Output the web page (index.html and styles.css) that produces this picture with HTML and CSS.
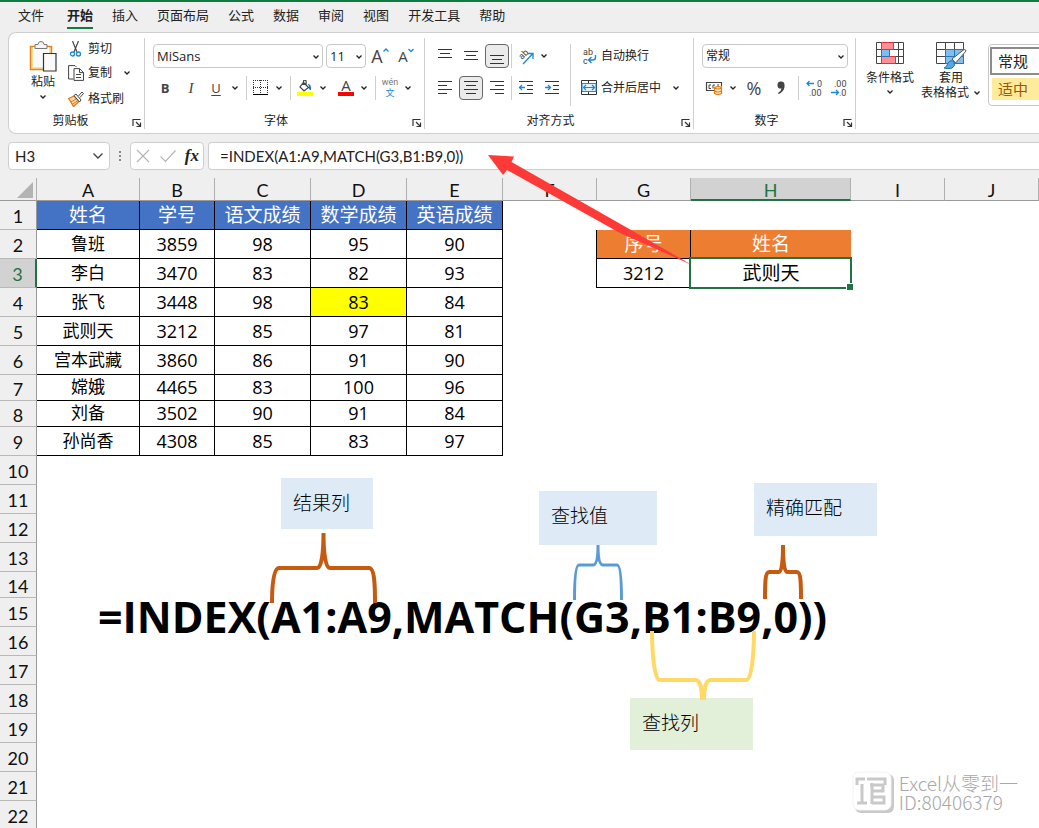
FILE: index.html
```html
<!DOCTYPE html>
<html lang="zh-CN">
<head>
<meta charset="utf-8">
<title>INDEX + MATCH</title>
<link rel="stylesheet" href="styles.css">
</head>
<body>
<svg class="defs" aria-hidden="true">
  <symbol id="chev" viewBox="0 0 8 8"><path d="M1.500 2.500 4 5l2.500-2.500" fill="none" stroke="#222" stroke-width="1.300"/></symbol>
  <symbol id="launch" viewBox="0 0 10 10"><path d="M1 8V1.500H8.500M4 4l4 4M8.500 4.500V8.500H4.500" fill="none" stroke="#333" stroke-width="1.200"/></symbol>
</svg>

<nav class="tabs">
  <a href="#file" class="tab tab-file">文件</a>
  <a href="#home" class="tab active">开始</a>
  <a href="#insert" class="tab">插入</a>
  <a href="#layout" class="tab">页面布局</a>
  <a href="#formula" class="tab">公式</a>
  <a href="#data" class="tab">数据</a>
  <a href="#review" class="tab">审阅</a>
  <a href="#view" class="tab">视图</a>
  <a href="#dev" class="tab">开发工具</a>
  <a href="#help" class="tab">帮助</a>
</nav>

<section class="ribbon">
  <div class="group clipboard">
    <div class="body">
      <button class="big">
        <svg width="28" height="32" viewBox="0 0 28 32"><path d="M1.500 5.500h21v23h-21z" fill="#ffdf94" stroke="#e3821f" stroke-width="1.500"/><path d="M4 6h16v20H4z" fill="#fafafa"/><path d="M6 3.500h3a3 3 0 0 1 6 0h3v4H6z" fill="#f4f4f4" stroke="#777"/><path d="M14.500 12.500h12.500v17.500H14.500z" fill="#fafafa" stroke="#333" stroke-width="1.200"/></svg>
        <span>粘贴</span>
        <svg class="chev" width="8" height="8"><use href="#chev"/></svg>
      </button>
      <div class="stack">
        <button class="cmd"><svg width="16" height="16" viewBox="0 0 16 16"><path d="M4.500 0l4.500 11M10.500 0L6 11" stroke="#444" stroke-width="1.200"/><circle cx="4.500" cy="13" r="2" fill="none" stroke="#1e88d0" stroke-width="1.300"/><circle cx="10.500" cy="13" r="2" fill="none" stroke="#1e88d0" stroke-width="1.300"/></svg>剪切</button>
        <button class="cmd"><svg width="16" height="16" viewBox="0 0 16 16"><path d="M5.500 14H.600V.600h6.400l1.500 1.500M6 3.600h5.500l4 4V15.400H6zM11.500 3.600v4h4M8 9.500h5M8 12.500h5" fill="none" stroke="#444"/></svg>复制<svg class="chev" width="8" height="8"><use href="#chev"/></svg></button>
        <button class="cmd"><svg width="16" height="16" viewBox="0 0 16 16"><path d="M.700 7.500L6 5l5 5.500-5.500 5z" fill="#ffd9a8" stroke="#e07a10" stroke-width="1.300"/><path d="M3 11l5-3M4.500 13l5-3" stroke="#e07a10"/><path d="M6 4.500l2-1.500 5 6-1.500 2zM10.500 5L14 1l1.500 1.500L12 6.500" fill="#fff" stroke="#444"/></svg>格式刷</button>
      </div>
    </div>
    <footer class="label"><span>剪贴板</span><button class="launch" aria-label="剪贴板设置"><svg width="10" height="10"><use href="#launch"/></svg></button></footer>
  </div>

  <div class="group font">
    <div class="body rows">
      <div class="row">
        <label class="pick pick-font"><select aria-label="字体"><option>MiSans</option></select><svg class="chev" width="8" height="8"><use href="#chev"/></svg></label>
        <label class="pick pick-size"><select aria-label="字号"><option>11</option></select><svg class="chev" width="8" height="8"><use href="#chev"/></svg></label>
        <button class="tool w26" aria-label="增大字号"><span class="grow">A</span><svg class="caret" width="6" height="16" viewBox="0 0 6 16"><path d="M.500 3.500L3 1l2.500 2.500" fill="none" stroke="#1e88d0" stroke-width="1.300"/></svg></button>
        <button class="tool w26" aria-label="减小字号"><span class="shrink">A</span><svg class="caret" width="6" height="16" viewBox="0 0 6 16"><path d="M.500 1L3 3.500 5.500 1" fill="none" stroke="#1e88d0" stroke-width="1.300"/></svg></button>
      </div>
      <div class="row">
        <button class="tool w26"><b>B</b></button>
        <button class="tool w26"><i>I</i></button>
        <button class="tool w24"><u>U</u></button>
        <button class="drop" aria-label="下划线选项"><svg width="8" height="8"><use href="#chev"/></svg></button>
        <span class="sep"></span>
        <button class="tool w22" aria-label="边框"><svg width="16" height="16" viewBox="0 0 16 16" shape-rendering="crispEdges"><path d="M0 .500h15M0 7.500h15M.500 0v13M7.500 0v13M14.500 0v13" stroke="#333" stroke-dasharray="1 1"/><path d="M0 14.500h15" stroke="#000"/></svg></button>
        <button class="drop" aria-label="边框选项"><svg width="8" height="8"><use href="#chev"/></svg></button>
        <span class="sep"></span>
        <button class="tool w22" aria-label="填充颜色"><svg width="16" height="16" viewBox="0 0 16 16"><path d="M6.500 2.500l5 5-4.500 3.500-4-4zM6.500 5V1.500a1.300 1.300 0 0 1 2.600 0V5" fill="none" stroke="#444" stroke-width="1.200"/><path d="M10.500 4q4-.500 3.500 6-3 0-2-4z" fill="#1e6fb8"/><path d="M0 12h16v4H0z" fill="#ff0"/></svg></button>
        <button class="drop" aria-label="填充颜色选项"><svg width="8" height="8"><use href="#chev"/></svg></button>
        <button class="tool w22 gap-left" aria-label="字体颜色"><span class="color-a">A</span></button>
        <button class="drop" aria-label="字体颜色选项"><svg width="8" height="8"><use href="#chev"/></svg></button>
        <span class="sep"></span>
        <button class="tool w22 pinyin"><span>wén</span><span class="wen">文</span></button>
        <button class="drop" aria-label="拼音选项"><svg width="8" height="8"><use href="#chev"/></svg></button>
      </div>
    </div>
    <footer class="label"><span>字体</span><button class="launch" aria-label="字体设置"><svg width="10" height="10"><use href="#launch"/></svg></button></footer>
  </div>

  <div class="group align">
    <div class="body">
      <div class="rows">
        <div class="row">
          <button class="tool w26" aria-label="顶端对齐"><svg width="16" height="16" viewBox="0 0 16 16"><path d="M1 1.500h14M3 5.500h10M1 9.500h14" stroke="#333"/></svg></button>
          <button class="tool w26" aria-label="垂直居中"><svg width="16" height="16" viewBox="0 0 16 16"><path d="M1 3.500h14M3 7.500h10M1 11.500h14" stroke="#333"/></svg></button>
          <button class="tool w26 on" aria-label="底端对齐"><svg width="16" height="16" viewBox="0 0 16 16"><path d="M1 7.500h14M3 11.500h10M1 15.500h14" stroke="#333"/></svg></button>
          <span class="sep"></span>
          <button class="tool w24" aria-label="方向"><svg width="20" height="20" viewBox="0 0 20 20"><text class="ab" transform="translate(7 14) rotate(-45)">ab</text><path d="M8 18L17.500 8M12.500 7.500H18V13" fill="none" stroke="#1e88d0" stroke-width="1.300"/></svg></button>
          <button class="drop" aria-label="方向选项"><svg width="8" height="8"><use href="#chev"/></svg></button>
        </div>
        <div class="row">
          <button class="tool w26" aria-label="左对齐"><svg width="16" height="16" viewBox="0 0 16 16"><path d="M1 1.500h14M1 5.500h9M1 9.500h14M1 13.500h9" stroke="#333"/></svg></button>
          <button class="tool w26 on" aria-label="居中"><svg width="16" height="16" viewBox="0 0 16 16"><path d="M1 1.500h14M3 5.500h10M1 9.500h14M3 13.500h10" stroke="#333"/></svg></button>
          <button class="tool w26" aria-label="右对齐"><svg width="16" height="16" viewBox="0 0 16 16"><path d="M1 1.500h14M6 5.500h9M1 9.500h14M6 13.500h9" stroke="#333"/></svg></button>
          <span class="sep"></span>
          <button class="tool w26" aria-label="减少缩进"><svg width="16" height="16" viewBox="0 0 16 16"><path d="M1 1.500h14M9 5.500h6M9 9.500h6M1 13.500h14" stroke="#333"/><path d="M7 7.500H1.500M4 5L1.500 7.500 4 10" fill="none" stroke="#1e88d0" stroke-width="1.300"/></svg></button>
          <button class="tool w26" aria-label="增加缩进"><svg width="16" height="16" viewBox="0 0 16 16"><path d="M1 1.500h14M9 5.500h6M9 9.500h6M1 13.500h14" stroke="#333"/><path d="M1 7.500h5.500M4 5l2.500 2.500L4 10" fill="none" stroke="#1e88d0" stroke-width="1.300"/></svg></button>
        </div>
      </div>
      <span class="divider"></span>
      <div class="rows">
        <div class="row"><button class="cmd"><svg width="16" height="20" viewBox="0 0 16 20"><text x="2" y="9" class="ab">ab</text><text x="2" y="18" class="ab">c</text><path d="M14.500 9v2.500q0 2.500-3 2.500H8M10.500 11L7.500 14l3 3" fill="none" stroke="#1e88d0" stroke-width="1.400"/></svg>自动换行</button></div>
        <div class="row"><button class="cmd"><svg width="16" height="16" viewBox="0 0 16 16"><path d="M.500 .500h15v14H.500zM7.500 1v3M7.500 11v3" fill="none" stroke="#333"/><path d="M1 3.500h14v8H1z" fill="#e3f1fb" stroke="#1e88d0"/><path d="M2.500 7.500h11M5 5L2.500 7.500 5 10M11 5l2.500 2.500L11 10" fill="none" stroke="#1e88d0" stroke-width="1.200"/></svg>合并后居中<svg class="chev" width="8" height="8"><use href="#chev"/></svg></button></div>
      </div>
    </div>
    <footer class="label"><span>对齐方式</span><button class="launch" aria-label="对齐设置"><svg width="10" height="10"><use href="#launch"/></svg></button></footer>
  </div>

  <div class="group number">
    <div class="body rows">
      <div class="row"><label class="pick pick-number"><select aria-label="数字格式"><option>常规</option></select><svg class="chev" width="8" height="8"><use href="#chev"/></svg></label></div>
      <div class="row">
        <button class="tool w24" aria-label="会计格式"><svg width="18" height="16" viewBox="0 0 18 16"><path d="M9 10.500H1.500v-8h15v4" fill="none" stroke="#444" stroke-width="1.200"/><path d="M6 5H4v3.500h2M8 8.500V5h2M12 5h2" fill="none" stroke="#444"/><path d="M9.500 7.500q3.500-2 7 0v6q-3.500 2-7 0z" fill="#ffe3c2" stroke="#e07a10" stroke-width="1.200"/><path d="M9.500 8q3.500 2 7 0M9.500 11q3.500 2 7 0" fill="none" stroke="#e07a10" stroke-width="1.200"/></svg></button>
        <button class="drop" aria-label="会计格式选项"><svg width="8" height="8"><use href="#chev"/></svg></button>
        <button class="tool w28 percent">%</button>
        <button class="tool w26" aria-label="千位分隔"><svg width="10" height="14" viewBox="0 0 10 14"><path d="M1.500 4.200a3.300 3.300 0 0 1 7-.500C9 8 6.500 11.500 2.500 13L2 12q3-1.500 3.500-4.500-4 .500-4-3.300z" fill="#444"/></svg></button>
        <span class="sep"></span>
        <button class="tool w24" aria-label="增加小数位"><svg width="16" height="20" viewBox="0 0 16 20"><text x="11" y="9" class="dec">0</text><text x="3" y="18" class="dec">.00</text><path d="M8 5.500H1M3.500 3L1 5.500 3.500 8" fill="none" stroke="#1e88d0" stroke-width="1.300"/></svg></button>
        <button class="tool w26" aria-label="减少小数位"><svg width="16" height="20" viewBox="0 0 16 20"><text x="3" y="9" class="dec">.00</text><text x="8" y="18" class="dec">.0</text><path d="M0 14.500h7.500M5 12l2.500 2.500L5 17" fill="none" stroke="#1e88d0" stroke-width="1.300"/></svg></button>
      </div>
    </div>
    <footer class="label"><span>数字</span><button class="launch" aria-label="数字设置"><svg width="10" height="10"><use href="#launch"/></svg></button></footer>
  </div>

  <div class="group styles">
    <button class="big"><svg width="28" height="28" viewBox="0 0 28 28"><path d="M.500 1.500h27v21H.500zM.500 8.500h27M.500 15.500h27M5.500 1.500v21M22.500 1.500v21" fill="#fff" stroke="#444"/><path d="M5.500 1.500h12v7h-12zM5.500 15.500h14v7h-14z" fill="#ff8d94" stroke="#d8353c"/><path d="M5.500 8.500h8v7h-8z" fill="#7fbdec" stroke="#1e78c0"/></svg><span>条件格式</span><svg class="chev" width="8" height="8"><use href="#chev"/></svg></button>
    <button class="big"><svg width="31" height="28" viewBox="0 0 31 28"><path d="M.500 1.500h27v21H.500zM.500 8.500h27M.500 15.500h27M9.500 1.500v21M18.500 1.500v21" fill="#fff" stroke="#444"/><path d="M9.500 8.500h18v14h-18z" fill="#83beec" stroke="#1e78c0"/><path d="M9.500 15.500h18M18.500 8.500v14" stroke="#1e78c0"/><path d="M16 18L28 8.500q2 0 2 1.500L19.500 22z" fill="#fff" stroke="#555"/><path d="M8 27q3-1 4-5 3-4 6-1 2 4-2 6-4 1.500-8 0z" fill="#5aa7e0" stroke="#1e6fb8"/></svg><span>套用</span><span class="two">表格格式<svg width="8" height="8"><use href="#chev"/></svg></span></button>
    <div class="gallery"><button class="style normal">常规</button><button class="style neutral">适中</button></div>
  </div>
</section>

<section class="formula-bar">
  <div class="name-box"><input aria-label="名称框" value="H3"><button aria-label="名称列表"><svg width="12" height="8" viewBox="0 0 12 8"><path d="M1.500 1.500L6 6l4.500-4.500" fill="none" stroke="#444" stroke-width="1.400"/></svg></button></div>
  <svg class="dots" width="4" height="12" viewBox="0 0 4 12"><path d="M1 1h2v2H1zM1 5h2v2H1zM1 9h2v2H1z" fill="#888"/></svg>
  <div class="actions">
    <button aria-label="取消"><svg width="16" height="14" viewBox="0 0 16 14"><path d="M2 1l12 12M14 1L2 13" stroke="#b5b5b5" stroke-width="1.200"/></svg></button>
    <button aria-label="输入"><svg width="18" height="14" viewBox="0 0 18 14"><path d="M1.500 7.500L6.500 12.500 16.500 1.500" fill="none" stroke="#b5b5b5" stroke-width="1.200"/></svg></button>
    <button class="fx">fx</button>
  </div>
  <input class="formula" aria-label="编辑栏" value="=INDEX(A1:A9,MATCH(G3,B1:B9,0))">
</section>

<main class="sheet">
  <table class="grid">
    <colgroup><col class="c-head"><col class="c-a"><col class="c-b"><col class="c-score"><col class="c-score"><col class="c-score"><col class="c-std"><col class="c-std"><col class="c-h"><col class="c-std"><col class="c-std"></colgroup>
    <thead><tr><th class="corner"><svg width="16" height="16" viewBox="0 0 16 16"><path d="M16 0v16H0z" fill="#b3b3b3"/></svg></th><th>A</th><th>B</th><th>C</th><th>D</th><th>E</th><th>F</th><th>G</th><th class="sel">H</th><th>I</th><th>J</th></tr></thead>
    <tbody>
      <tr class="head"><th>1</th><td>姓名</td><td>学号</td><td>语文成绩</td><td>数学成绩</td><td>英语成绩</td></tr>
      <tr class="rec"><th>2</th><td>鲁班</td><td>3859</td><td>98</td><td>95</td><td>90</td><td class="edge"></td><td class="orange line">序号</td><td class="orange">姓名</td></tr>
      <tr class="rec"><th class="sel">3</th><td>李白</td><td>3470</td><td>83</td><td>82</td><td>93</td><td class="edge"></td><td class="line under">3212</td><td class="cursor">武则天</td></tr>
      <tr class="rec"><th>4</th><td>张飞</td><td>3448</td><td>98</td><td class="mark">83</td><td>84</td></tr>
      <tr class="rec"><th>5</th><td>武则天</td><td>3212</td><td>85</td><td>97</td><td>81</td></tr>
      <tr class="rec"><th>6</th><td>宫本武藏</td><td>3860</td><td>86</td><td>91</td><td>90</td></tr>
      <tr class="rec short"><th>7</th><td>嫦娥</td><td>4465</td><td>83</td><td>100</td><td>96</td></tr>
      <tr class="rec short"><th>8</th><td>刘备</td><td>3502</td><td>90</td><td>91</td><td>84</td></tr>
      <tr class="rec"><th>9</th><td>孙尚香</td><td>4308</td><td>85</td><td>83</td><td>97</td></tr>
      <tr><th>10</th></tr><tr><th>11</th></tr><tr><th>12</th></tr><tr><th>13</th></tr>
      <tr class="short"><th>14</th></tr><tr><th>15</th></tr><tr><th>16</th></tr><tr><th>17</th></tr><tr><th>18</th></tr><tr><th>19</th></tr><tr><th>20</th></tr><tr><th>21</th></tr><tr><th>22</th></tr>
    </tbody>
  </table>

  <p class="big-formula">=INDEX(A1:A9,MATCH(G3,B1:B9,0))</p>
  <div class="note result">结果列</div>
  <div class="note lookup">查找值</div>
  <div class="note exact">精确匹配</div>
  <div class="note column">查找列</div>
</main>

<svg class="marks" width="1039" height="828" viewBox="0 0 1039 828" aria-hidden="true">
  <path d="M488 155L514 156.500 511.500 162 624 226 692 265 620 233 507 170 503 175z" fill="#fd3a38"/>
  <g fill="none">
    <path d="M272 603C272 588 273 568 279 568H317C322 568 323.500 550 323.500 533C323.500 550 325 568 330 568H369C375 568 375 588 375 603" stroke="#c55a11" stroke-width="4"/>
    <path d="M574.500 600C574.500 585 575 565 579 565H593C597 565 598 555 598 545C598 555 599 565 603 565H617C621 565 621.500 585 621.500 600" stroke="#5b9bd5" stroke-width="3"/>
    <path d="M765 599C765 585 765 572 769 572H779C782 572 783 560 783 545C783 560 784 572 787 572H797C801 572 801 585 801 599" stroke="#c55a11" stroke-width="4"/>
    <path d="M652 631C652 650 654 680 660 680H695C701 680 702 692 702 698H704C704 692 705 680 711 680H746C752 680 754 650 754 631" stroke="#ffd966" stroke-width="4"/>
  </g>
</svg>

<aside class="watermark">
  <svg width="42" height="42" viewBox="0 0 42 42"><rect x="3" y="3" width="39" height="39" rx="6" fill="#c9c9c9"/><rect x="1" y="1" width="38" height="38" rx="6" fill="#fff" stroke="#f2f2f2"/><path d="M5 14V8h8M10 13v19M5 32h10M15 8h18v6M18 14h13v6H20M20 12v21M20 26h12v6H20" fill="none" stroke="#c9c9c9" stroke-width="3"/></svg>
  <div><div>Excel从零到一</div><div>ID:80406379</div></div>
</aside>
</body>
</html>
```
FILE: styles.css
```css
* { box-sizing: border-box; }
body {
  margin: 0;
  height: 100vh;
  overflow: hidden;
  position: relative;
  display: flex;
  flex-direction: column;
  background: #efefef;
  border-top: 2px solid #107c41;
  color: #222;
  font: 12px/16px "Open Sans", "Noto Sans CJK SC", sans-serif;
}
button, input, select { font: inherit; color: inherit; border: 0; padding: 0; margin: 0; background: none; }
svg { flex: none; display: block; }
.defs { position: absolute; width: 0; height: 0; }

.tabs { display: flex; gap: 19px; height: 30px; padding-left: 18px; flex: none; }
.tab { font-size: 13px; line-height: 27px; height: 27px; color: #222; text-decoration: none; white-space: nowrap; }
.tab-file { margin-right: 4px; }
.tab.active { font-weight: 700; border-bottom: 2px solid #107c41; }

.ribbon {
  display: flex;
  flex: none;
  height: 102px;
  margin-left: 8px;
  background: #fff;
  border: 1px solid #cfcfcf;
  border-right: 0;
  border-radius: 8px 0 0 8px;
  overflow: hidden;
}
.group { display: flex; flex-direction: column; flex: none; margin: 5px 0 4px; border-right: 1px solid #cfcfcf; }
.body { display: flex; flex: 1; }
.label { display: flex; align-items: center; height: 16px; text-align: center; }
.label span { flex: 1; padding-right: 12px; }
.clipboard .label span { padding-right: 0; }
.launch { width: 12px; height: 12px; align-self: end; }
.clipboard { width: 136px; }
.font { width: 280px; padding-left: 7px; }
.align { width: 269px; padding-left: 7px; }
.number { width: 162px; padding-left: 8px; }
.styles { flex-direction: row; border-right: 0; padding-left: 9px; }

.rows { display: flex; flex-direction: column; gap: 8px; padding-top: 6px; }
.row { display: flex; align-items: center; height: 24px; }
.tool { display: flex; align-items: center; justify-content: center; height: 24px; }
.w22 { width: 22px; }
.w24 { width: 24px; }
.w26 { width: 26px; }
.w28 { width: 28px; }
.gap-left { margin-left: 5px; }
.on { width: 24px; margin: 0 1px; background: #ebebeb; border: 1px solid #666; border-radius: 4px; }
.drop { width: 14px; height: 24px; display: flex; align-items: center; justify-content: center; }
.sep { width: 1px; height: 24px; background: #cfcfcf; margin: 0 3px 0 4px; }
.align .sep { margin: 0 1px; }
.divider { width: 1px; height: 62px; margin: 6px 10px 0 auto; background: #cfcfcf; }
.align .rows:last-child { width: 112px; }

.big { display: flex; flex-direction: column; align-items: center; padding: 0; height: 70px; }
.clipboard .big { width: 50px; margin: 3px 0 0 9px; }
.big .chev { margin-top: 3px; }
.clipboard .big span { line-height: 17px; }
.stack { display: flex; flex-direction: column; }
.cmd { display: flex; align-items: center; gap: 4px; height: 25px; white-space: nowrap; }
.stack .cmd:first-child { height: 22px; }
.stack .cmd:last-child { height: 27px; }
.cmd .chev { margin-left: 7px; }

.pick { position: relative; display: flex; height: 24px; border: 1px solid #c8c8c8; border-radius: 4px; margin-right: 3px; }
.pick select { appearance: none; width: 100%; padding-left: 3px; font-size: 13px; line-height: 22px; }
.pick .chev { position: absolute; right: 2px; top: 8px; pointer-events: none; }
.pick-font { width: 170px; margin-left: 1px; }
.pick-size { width: 40px; margin-right: 1px; }
.pick-number { width: 146px; }
.pick-number select { font-size: 12px; }

.tool b { font-size: 13px; color: #444; }
.tool i { font: italic 15px "Liberation Serif", serif; color: #444; }
.tool u { font-size: 13px; color: #444; text-underline-offset: 2px; }
.grow { font-size: 18px; color: #444; }
.shrink { font-size: 15px; color: #444; }
.color-a { width: 16px; height: 16px; font-size: 15px; line-height: 11px; color: #444; border-bottom: 4px solid #f00; }
.pinyin { flex-direction: column; font: 9px/11px "Roboto", "Noto Sans CJK SC", sans-serif; color: #777; }
.wen { color: #1e88d0; }
.percent { font-size: 18px; color: #444; }
.ab { font: 9px "Roboto", sans-serif; fill: #444; }
.dec { font: 9px "Roboto", sans-serif; fill: #444; }

.styles .big { width: 50px; margin: 3px 6px 0 0; }
.styles .big + .big { width: 60px; margin: 3px 7px 0 0; }
.styles .big span { line-height: 15px; margin-top: 1px; white-space: nowrap; }
.styles .big .two { display: flex; align-items: center; gap: 4px; margin-top: 0; }
.gallery { width: 120px; height: 62px; margin-top: 6px; padding: 2px 0 0 1px; border: 1px solid #c8c8c8; border-radius: 4px; display: flex; flex-direction: column; gap: 3px; }
.style { height: 28px; text-align: left; padding-left: 6px; font-size: 15px; }
.normal { border: 2px solid #8c8c8c; }
.neutral { height: 22px; margin-left: 2px; background: #ffeb9c; color: #9c5700; }

.formula-bar { display: flex; align-items: center; flex: none; height: 28px; margin: 8px 0 8px 8px; }
.name-box, .actions, .formula { background: #fff; border: 1px solid #cfcfcf; border-radius: 4px; height: 28px; }
.name-box { display: flex; align-items: center; width: 102px; padding: 0 5px 0 6px; }
.name-box input { flex: 1; min-width: 0; font: 15px "Lato", sans-serif; }
.dots { margin: 0 8px; }
.actions { display: flex; align-items: center; justify-content: space-between; width: 74px; padding: 0 4px; }
.fx { font: italic 700 17px/20px "Liberation Serif", serif; }
.formula { flex: 1; margin-left: 4px; border-right: 0; border-radius: 4px 0 0 4px; padding-left: 11px; font: 15px "Lato", sans-serif; }

.sheet { position: relative; flex: 1; background: #fff; overflow: hidden; }
.grid { table-layout: fixed; width: 1039px; border-spacing: 0; font-size: 18px; line-height: 20px; text-align: center; color: #000; }
.c-head { width: 37px; }
.c-a { width: 103px; }
.c-b { width: 75px; }
.c-score { width: 96px; }
.c-std { width: 94px; }
.c-h { width: 160px; }
.grid th, .grid td { padding: 0 0 1px; white-space: nowrap; }
.grid th { background: #efefef; font-weight: 400; font-family: "Lato", sans-serif; color: #111; }
.grid thead tr { height: 23px; }
.grid thead th { border-right: 1px solid #b0b0b0; border-bottom: 1px solid #999; padding: 2px 0 0; line-height: 18px; }
.grid tbody tr { height: 29px; }
.grid tbody .short { height: 26px; }
.grid tbody th { border-right: 1px solid #999; border-bottom: 1px solid #b8b8b8; padding: 2px 0 0; }
.grid .sel { background: #d2d2d2; color: #217346; }
.grid thead .sel { border-bottom: 2px solid #217346; }
.grid tbody .sel { border-right: 2px solid #217346; }
.corner svg { margin: 0 3px 0 auto; }
.head td, .rec td:nth-child(-n+6) { border-right: 1px solid #000; border-bottom: 1px solid #000; }
.head td { background: #4472c4; color: #fff; font-size: 19px; }
.rec td:nth-child(2) { font-size: 17px; }
.grid .mark { background: #ff0; }
.edge, .grid .line { border-right: 1px solid #000; }
.grid .orange { background: #ed7d31; color: #fff; font-size: 19px; }
.line { border-bottom: 1px solid #000; }
.cursor { position: relative; font-size: 19px; }
.cursor::before { content: ""; position: absolute; inset: -2px -1px -1px -2px; border: 2px solid #217346; }
.cursor::after { content: ""; position: absolute; right: -2px; bottom: -2px; width: 6px; height: 6px; background: #217346; border: 1px solid #fff; border-width: 1px 0 0 1px; }

.big-formula { position: absolute; left: 98px; top: 409px; margin: 0; font-size: 43px; line-height: 60px; font-weight: 700; color: #000; white-space: nowrap; }
.note { position: absolute; padding: 12px; background: #deeaf6; color: #000; font-size: 19px; line-height: 26px; font-weight: 300; }
.result { left: 281px; top: 300px; width: 92px; height: 51px; }
.lookup { left: 539px; top: 313px; width: 118px; height: 54px; }
.exact { left: 754px; top: 305px; width: 123px; height: 53px; }
.column { left: 630px; top: 520px; width: 123px; height: 52px; background: #e2efd9; }

.marks { position: absolute; left: 0; top: -2px; pointer-events: none; }
.watermark { position: absolute; right: 21px; bottom: 15px; display: flex; align-items: center; gap: 5px; font-size: 19px; line-height: 19px; font-weight: 300; font-family: "Noto Sans CJK SC", sans-serif; color: #a8a8a8; }
```
